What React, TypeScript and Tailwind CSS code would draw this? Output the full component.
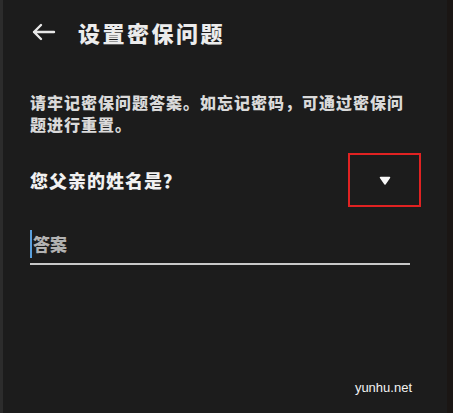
import React from 'react';

const CJK = { fontFamily: '"Noto Sans CJK SC", "Noto Sans", sans-serif' };

export default function App() {
  return (
    <div className="relative flex h-[413px] w-[453px] overflow-hidden bg-[#1c1c1c]" style={CJK}>
      <div className="w-[3px] shrink-0 bg-[#2c2c2c]" />
      <div className="flex flex-1 flex-col pl-[27px] pr-[26px]">
        {/* header */}
        <div className="flex h-[64px] items-center">
          <svg width="24" height="18" viewBox="0 0 24 18" className="ml-[2px] text-[#e8e8e8]" fill="none" stroke="currentColor" strokeWidth="2.4" strokeLinecap="round" strokeLinejoin="round">
            <path d="M22 9H2M9 2L2 9l7 7" />
          </svg>
          <h1 className="ml-[22px] text-[22px] font-black tracking-[2.5px] text-[#ececec]">设置密保问题</h1>
        </div>

        <p className="mt-[27px] w-[384px] text-[16px] font-black leading-[22px] tracking-[1px] text-[#dadada]">
          请牢记密保问题答案。如忘记密码，可通过密保问题进行重置。
        </p>

        <div className="mt-[18px] flex items-center justify-between">
          <span className="text-[18px] font-black tracking-[1px] text-[#f0f0f0]">您父亲的姓名是？</span>
          <div className="flex h-[54px] w-[73px] items-center justify-center border-2 border-[#e02222]">
            <svg width="12" height="9" viewBox="0 0 12 9">
              <path d="M1.5 1.5h9L6 8z" fill="#f8f8f8" stroke="#f8f8f8" strokeLinejoin="round" strokeWidth="1.5" />
            </svg>
          </div>
        </div>

        <div className="mt-[20px] flex h-[38px] w-[380px] items-center border-b-2 border-[#c8c8c8] pb-[2px]">
          <span className="h-[28px] w-[2px] bg-[#5a9fdc]" />
          <span className="ml-[1px] text-[17px] font-black text-[#b2b2b2]">答案</span>
        </div>
      </div>
      <div className="w-[6px] shrink-0 bg-[#1a1614]" />

      <span className="absolute bottom-[16px] right-[41px] text-[13px] text-[#f2f2f2]" style={{ fontFamily: '"Liberation Sans", sans-serif' }}>
        yunhu.net
      </span>
    </div>
  );
}
